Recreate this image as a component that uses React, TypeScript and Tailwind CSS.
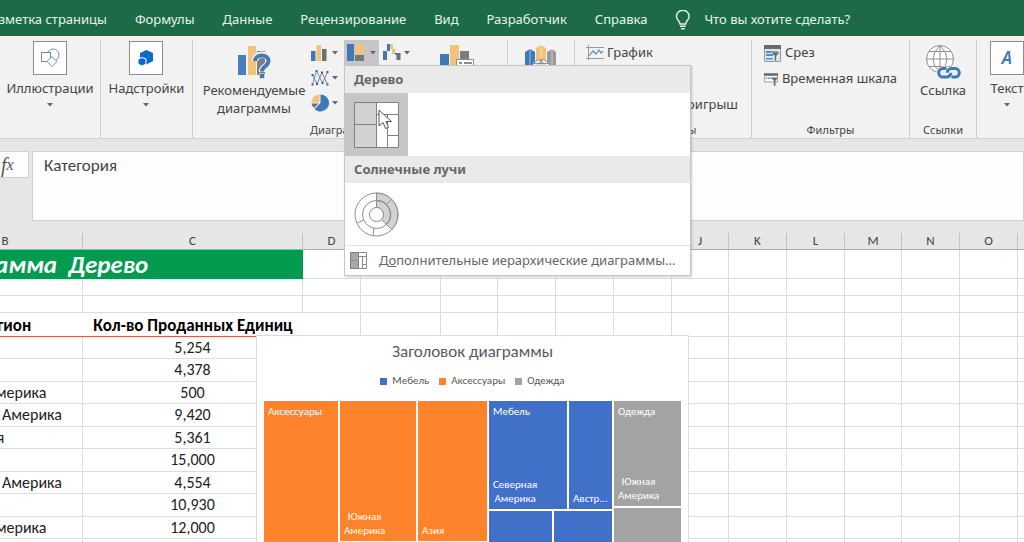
import type { ReactNode } from "react";

const TABS = ["Разметка страницы", "Формулы", "Данные", "Рецензирование", "Вид", "Разработчик", "Справка"];

const COLUMNS = ["D", "E", "F", "G", "H", "I", "J", "K", "L", "M", "N", "O", "P"];

const ROWS = [
  { region: "", units: "5,254" },
  { region: "", units: "4,378" },
  { region: "Южная Америка", units: "500" },
  { region: "Северная Америка", units: "9,420" },
  { region: "Австралия", units: "5,361" },
  { region: "", units: "15,000" },
  { region: "Северная Америка", units: "4,554" },
  { region: "", units: "10,930" },
  { region: "Южная Америка", units: "12,000" },
  { region: "", units: "" },
];

const LEGEND = [
  { name: "Мебель", swatch: "bg-[#4070c8]" },
  { name: "Аксессуары", swatch: "bg-[#fd842d]" },
  { name: "Одежда", swatch: "bg-[#a3a3a3]" },
];

function Caret() {
  return (
    <svg width="6" height="4" viewBox="0 0 6 4" aria-hidden="true">
      <path d="M0 0h6L3 3.5z" fill="#666" />
    </svg>
  );
}

function Group({
  width,
  label,
  labelClass = "",
  children,
}: {
  width: string;
  label?: string;
  labelClass?: string;
  children: ReactNode;
}) {
  return (
    <section className={`${width} flex shrink-0 flex-col border-r border-[#cfcfcf]`}>
      <div className="flex h-[82px] shrink-0 justify-center">{children}</div>
      {label && <div className={`${labelClass} text-center text-[11px] leading-4 text-[#444]`}>{label}</div>}
    </section>
  );
}

function BoxedButton({ label, children }: { label: string; children: ReactNode }) {
  return (
    <button type="button" className="flex flex-col items-center pt-px">
      <span className="flex size-[34px] items-center justify-center border border-[#8c8c8c] bg-white">{children}</span>
      <span className="mt-[3px] leading-5">{label}</span>
      <span className="mt-[5px] flex">
        <Caret />
      </span>
    </button>
  );
}

function ShapesIcon() {
  return (
    <svg width="20" height="20" viewBox="0 0 20 20" fill="#fff" stroke="#6d8cac" strokeWidth="1">
      <circle cx="13" cy="7" r="6" />
      <rect x="1.500" y="4.500" width="9" height="9" />
      <path d="M12 8.500l5 5-5 5-5-5z" />
    </svg>
  );
}

function AddinsIcon() {
  return (
    <svg width="18" height="18" viewBox="0 0 18 18">
      <path d="M9.500 1l6.500 3v8l-6.500 3.500L3 12V4z" fill="#0b6bcb" />
      <path d="M5 8.500l4 1.500v5l-4 2-4-2v-5z" fill="#0b6bcb" stroke="#fff" />
    </svg>
  );
}

function RecommendedIcon() {
  return (
    <svg width="34" height="34" viewBox="0 0 34 34">
      <path d="M1 10h8v20H1z" fill="#4a7ebb" />
      <path d="M11 1h8v29h-8z" fill="#f2c37b" />
      <path d="M20 6h8v24h-8z" fill="#7d7d7d" />
      <path d="M18 16c0-8.500 14-8.500 14 0 0 6-7 5-7 11" fill="none" stroke="#f2f2f2" strokeWidth="6.500" />
      <path d="M18 16c0-7.500 13.500-7.500 13.500 0 0 5.500-6.500 5-6.500 10.500" fill="none" stroke="#4178b8" strokeWidth="4" />
      <path d="M22.500 28.500h5v5h-5z" fill="#4178b8" stroke="#f2f2f2" strokeWidth=".6" />
    </svg>
  );
}

function ColumnIcon() {
  return (
    <svg width="16" height="16" viewBox="0 0 16 16">
      <path d="M0 6h4.500v10H0z" fill="#4178b8" />
      <path d="M5.500 0H10v16H5.500z" fill="#f2c37b" />
      <path d="M11 4h4.500v12H11z" fill="#6f6f6f" />
    </svg>
  );
}

function ScatterLineIcon() {
  return (
    <svg width="18" height="18" viewBox="0 0 18 18" fill="none">
      <path d="M1.500 15.500L5.500 2l6 12L16.500 3" stroke="#6792c4" />
      <path d="M1.500 6l4.500 9 5-11.500 5.500 12" stroke="#808080" />
      <path
        d="M.500 14.500h2v2h-2zM4.500 1h2v2h-2zM10.500 13h2v2h-2zM15.500 2h2v2h-2zM.500 5h2v2h-2zM5 14h2v2H5zM10 2.500h2v2h-2zM15.500 14.500h2v2h-2z"
        fill="#44607f"
      />
    </svg>
  );
}

function PieIcon() {
  return (
    <svg width="18" height="18" viewBox="0 0 18 18">
      <path d="M9.500 9V.500a8.500 8.500 0 1 1-6 14.500z" fill="#4178b8" />
      <path d="M8.500 8.500H.500a8 8 0 0 1 8-8z" fill="#f2c37b" />
      <path d="M.500 9.500h7l-4.500 4.500A8 8 0 0 1 .500 9.500z" fill="#6f6f6f" />
    </svg>
  );
}

function HierarchyIcon() {
  return (
    <svg width="17" height="17" viewBox="0 0 17 17">
      <path d="M0 0h7v17H0z" fill="#4178b8" />
      <path d="M8 0h5a4 4 0 0 1 4 4v6H8z" fill="#f2c37b" />
      <path d="M8 11h9v6H8z" fill="#777" />
    </svg>
  );
}

function WaterfallIcon() {
  return (
    <svg width="18" height="17" viewBox="0 0 18 17">
      <path d="M0 7h4v9H0zM4 0h3v7H4z" fill="#4178b8" />
      <path d="M7 0h3v5H7zM9 5h3.500v5H9z" fill="#f2c37b" />
      <path d="M13.500 9h4v7h-4z" fill="#6f6f6f" />
      <path d="M12 9h3v2h-3z" fill="#4178b8" />
    </svg>
  );
}

function PivotChartIcon() {
  return (
    <svg width="35" height="34" viewBox="0 0 35 34">
      <path d="M0 9h9v21H0z" fill="#4178b8" />
      <path d="M10 0h9v30h-9z" fill="#f2c37b" />
      <path d="M20 6h9v24h-9z" fill="#7d7d7d" />
      <path d="M16.500 14.500h17v18h-17z" fill="#fff" stroke="#8c8c8c" />
      <path d="M19 18h3M24 18h8M19 22h3M24 22h8" stroke="#8c8c8c" strokeWidth="2" />
    </svg>
  );
}

function MapIcon() {
  return (
    <svg width="32" height="34" viewBox="0 0 32 34">
      <path d="M0 7l5-3 5 3v23H0z" fill="#4178b8" />
      <path d="M11 3l5-3 5 3v27H11z" fill="#f2c37b" />
      <path d="M22 7l5-3 4 3v23h-9z" fill="#9a9a9a" />
      <path d="M5 4v24M16 0v24M27 4v24" stroke="#fff" strokeOpacity=".5" />
      <circle cx="16" cy="24" r="9.500" fill="#fff" stroke="#8c8c8c" />
      <path d="M16 15v18M7 24h18M9 18.500h14M16 15q-8 9 0 18M16 15q8 9 0 18" fill="none" stroke="#8c8c8c" />
    </svg>
  );
}

function SparklineIcon() {
  return (
    <svg width="18" height="16" viewBox="0 0 18 16" fill="none">
      <path d="M2.500 0v15M0 13.500h18M0 2.500h18" stroke="#999" />
      <path d="M3 11l4-5 3 3 3-4 2 3 2-2" stroke="#5a8bc4" strokeWidth="1.200" />
    </svg>
  );
}

function WinLossIcon() {
  return (
    <svg width="18" height="16" viewBox="0 0 18 16" fill="none">
      <path d="M1 3h3v4H1zM6 3h3v4H6z" fill="#4178b8" />
      <path d="M11 9h3v4h-3z" fill="#777" />
    </svg>
  );
}

function SlicerIcon() {
  return (
    <svg width="17" height="17" viewBox="0 0 17 17">
      <path d="M.500.500h16v16H.500z" fill="#dde7f2" stroke="#8a9bb0" />
      <path d="M0 0h17v4H0z" fill="#6a6a6a" />
      <path d="M2 6h12v2H2zM2 9h7v2H2zM2 13h7v1.500H2z" fill="#5a8bc4" />
      <path d="M7 7h9l-3.500 4v5h-2v-5z" fill="#6a6a6a" stroke="#f2f2f2" strokeWidth=".5" />
    </svg>
  );
}

function TimelineIcon() {
  return (
    <svg width="17" height="15" viewBox="0 0 17 15">
      <path d="M.500.500h16v10H.500z" fill="#fff" stroke="#8a8a8a" />
      <path d="M0 0h17v3H0z" fill="#6a6a6a" />
      <path d="M2 5h2v2H2zM5 5h3v2H5zM9 5h2v2H9z" fill="#5a8bc4" />
      <path d="M9 5h8l-3 4v6h-2V9z" fill="#6a6a6a" />
    </svg>
  );
}

function LinkIcon() {
  return (
    <svg width="36" height="35" viewBox="0 0 36 35" fill="none">
      <circle cx="15" cy="15" r="13.500" fill="#fff" stroke="#8e8e8e" />
      <path d="M15 1.500v27M1.500 15h27M4 7.500h22M4 22.500h22M15 1.500q-14 13.500 0 27M15 1.500q14 13.500 0 27" stroke="#8e8e8e" />
      <g stroke="#f2f2f2" strokeWidth="6">
        <rect x="14.500" y="25.500" width="11" height="7" rx="3.500" />
        <rect x="23" y="25.500" width="11" height="7" rx="3.500" />
      </g>
      <g stroke="#4178b8" strokeWidth="3">
        <path d="M21.500 24.500H18a4.300 4.300 0 0 0 0 8.600h3.500a4.300 4.300 0 0 0 4.300-4.300" />
        <path d="M26.500 33.100H30a4.300 4.300 0 0 0 0-8.600h-3.500a4.300 4.300 0 0 0-4.300 4.300" />
      </g>
    </svg>
  );
}

function BulbIcon() {
  return (
    <svg width="16" height="20" viewBox="0 0 16 20" fill="none" stroke="#e6f0ea" strokeWidth="1.400">
      <path d="M5 14c0-3-3.500-4-3.500-7.500a6.300 6.300 0 0 1 12.600 0C14.100 10 10.700 11 10.700 14zM5 16.300h5.700M6 18.800h3.700" />
    </svg>
  );
}

function TreemapIcon() {
  return (
    <svg width="45" height="46" viewBox="0 0 45 46" fill="#fff" stroke="#808080">
      <path d="M.500.500h44v45H.500z" />
      <path d="M.500.500h22v45h-22z" fill="#d2d2d2" />
      <path d="M.500 22.500h22M22.500 12.500h22M33.500 12.500v33M33.500 33.500h11" />
    </svg>
  );
}

function SunburstIcon() {
  return (
    <svg width="45" height="45" viewBox="0 0 45 45" fill="none" stroke="#8c8c8c">
      <circle cx="22.500" cy="22.500" r="21.500" fill="#fff" />
      <path d="M22.500 1a21.500 21.500 0 0 1 15.200 36.700l-5.300-5.300A14 14 0 0 0 22.500 8.500z" fill="#d2d2d2" />
      <path d="M22.500 8.500a14 14 0 0 1 9.900 23.900l-5-5A7 7 0 0 0 22.500 15.500z" fill="#d2d2d2" />
      <circle cx="22.500" cy="22.500" r="14" />
      <circle cx="22.500" cy="22.500" r="7" fill="#fff" />
      <path d="M32.400 12.600l5.300-5.300M9.500 28l-6.500 3M20 36.300l-1 7.400" />
    </svg>
  );
}

function SmallTreemapIcon() {
  return (
    <svg width="17" height="17" viewBox="0 0 17 17" fill="#fff" stroke="#8c8c8c">
      <path d="M.500.500h16v16H.500z" />
      <path d="M.500.500h8v16h-8z" fill="#a8a8a8" stroke="#808080" />
      <path d="M.500 8.500h8M8.500 4.500h8M12.500 4.500v12M12.500 12.500h4" />
    </svg>
  );
}

function Cursor() {
  return (
    <svg width="16" height="22" viewBox="0 0 16 22" className="absolute left-[33px] top-[16px]" aria-hidden="true">
      <path d="M1 1v16l4-3.500 2.500 6 3-1.300L8 12.500h5.500z" fill="#fff" stroke="#555" />
    </svg>
  );
}

function SmallButton({ name, children }: { name: string; children: ReactNode }) {
  return (
    <button type="button" aria-label={name} className="flex h-[25px] w-[27px] items-center justify-between">
      {children}
      <Caret />
    </button>
  );
}

function HierarchyMenu() {
  return (
    <div
      role="menu"
      className="absolute left-0 top-full z-20 w-[347px] border border-[#c6c6c6] bg-white text-[#666] shadow-[1px_1px_2px_rgba(0,0,0,0.2)]"
    >
      <div className="h-[27px] bg-[#eaeaea] px-[9px] font-bold leading-[27px]">Дерево</div>
      <button type="button" role="menuitem" aria-label="Дерево" className="relative flex size-[63px] items-center justify-center bg-[#c6c6c6]">
        <TreemapIcon />
        <Cursor />
      </button>
      <div className="h-[27px] bg-[#eaeaea] px-[9px] font-bold leading-[27px]">Солнечные лучи</div>
      <button type="button" role="menuitem" aria-label="Солнечные лучи" className="flex size-[62px] items-center justify-center">
        <SunburstIcon />
      </button>
      <button type="button" role="menuitem" className="flex h-[30px] w-full items-center gap-3 border-t border-[#e1e1e1] px-[5px]">
        <SmallTreemapIcon />
        <span>
          Д<u>о</u>полнительные иерархические диаграммы...
        </span>
      </button>
    </div>
  );
}

function Ribbon() {
  return (
    <div className="relative z-10 flex h-[103px] shrink-0 border-b border-[#d2d2d2] bg-[#f2f2f2] pt-1 text-[13px] text-[#444]">
      <Group width="w-[101px]">
        <BoxedButton label="Иллюстрации">
          <ShapesIcon />
        </BoxedButton>
      </Group>
      <Group width="w-[92px]">
        <BoxedButton label="Надстройки">
          <AddinsIcon />
        </BoxedButton>
      </Group>
      <Group width="w-[315px]" label="Диаграммы" labelClass="pr-4">
        <div className="flex w-full pl-[11px]">
          <button type="button" className="flex w-[100px] flex-col items-center pt-[5px]">
            <RecommendedIcon />
            <span className="mt-[2px] leading-[18px]">
              Рекомендуемые
              <br />
              диаграммы
            </span>
          </button>
          <div className="w-10 pl-[7px]">
            <SmallButton name="Гистограмма">
              <ColumnIcon />
            </SmallButton>
            <SmallButton name="График">
              <ScatterLineIcon />
            </SmallButton>
            <SmallButton name="Круговая">
              <PieIcon />
            </SmallButton>
          </div>
          <div className="relative h-[25px]">
            <button type="button" aria-label="Иерархическая" aria-expanded="true" className="flex h-full w-[35px] items-center justify-between bg-[#c6c6c6] px-[3px]">
              <HierarchyIcon />
              <Caret />
            </button>
            <HierarchyMenu />
          </div>
          <div className="ml-1">
            <SmallButton name="Каскадная">
              <WaterfallIcon />
            </SmallButton>
          </div>
          <button type="button" aria-label="Сводная диаграмма" className="ml-[30px] flex pt-[5px]">
            <PivotChartIcon />
          </button>
        </div>
      </Group>
      <Group width="w-[67px]">
        <button type="button" aria-label="3D-карта" className="flex pt-[5px]">
          <MapIcon />
        </button>
      </Group>
      <Group width="w-[177px]" label="Спарклайны">
        <div className="flex w-full flex-col justify-between px-[11px] pb-1">
          <button type="button" className="flex h-[26px] items-center gap-[3px]">
            <SparklineIcon />
            График
          </button>
          <button type="button" className="flex h-[26px] items-center gap-px whitespace-nowrap">
            <WinLossIcon />
            Выигрыш/проигрыш
          </button>
        </div>
      </Group>
      <Group width="w-[158px]" label="Фильтры">
        <div className="flex w-full flex-col px-3">
          <button type="button" className="flex h-[26px] items-center gap-1">
            <SlicerIcon />
            Срез
          </button>
          <button type="button" className="flex h-[26px] items-center gap-1 whitespace-nowrap">
            <TimelineIcon />
            Временная шкала
          </button>
        </div>
      </Group>
      <Group width="w-[67px]" label="Ссылки">
        <button type="button" className="flex flex-col items-center pt-1">
          <LinkIcon />
          <span className="mt-[2px] leading-[18px]">Ссылка</span>
        </button>
      </Group>
      <Group width="w-[61px]">
        <BoxedButton label="Текст">
          <span className="text-[17px] font-semibold italic text-[#4178b8]">A</span>
        </BoxedButton>
      </Group>
    </div>
  );
}

function FormulaBar() {
  return (
    <div className="flex shrink-0 gap-[3px] bg-[#e6e6e6] pb-3 pt-3">
      <button
        type="button"
        aria-label="Вставить функцию"
        className="flex h-[27px] w-[29px] items-center border border-l-0 border-[#d0d0d0] bg-[#fdfdfd] pl-px font-['Liberation_Serif',serif] text-[20px] italic text-[#555]"
      >
        f<span className="text-[16px]">x</span>
      </button>
      <textarea
        aria-label="Строка формул"
        defaultValue="Категория"
        className="h-[70px] flex-1 resize-none border border-[#d0d0d0] bg-[#fdfdfd] px-[11px] py-1 font-[Carlito,Lato,'Noto_Sans',sans-serif] text-[17px] leading-[20px] text-[#444] outline-none"
      />
    </div>
  );
}

const CELL = "border-b border-r border-[#dcdcdc] p-0";

function EmptyCells({ row }: { row: string }) {
  return (
    <>
      {COLUMNS.map((column) => (
        <td key={`${row}-${column}`} className={CELL} />
      ))}
    </>
  );
}

function Sheet() {
  return (
    <table className="-ml-[72px] w-[1147px] table-fixed border-separate border-spacing-0 text-[16px] leading-5 text-[#222]">
      <colgroup>
        <col className="w-[155px]" />
        <col className="w-[220px]" />
        <col className="w-[58px]" />
        <col className="w-[80px]" />
        <col className="w-[57px]" />
        <col className="w-[58px]" />
        <col className="w-[58px]" />
        <col className="w-[58px]" />
        <col className="w-[57px]" />
        <col className="w-[58px]" />
        <col className="w-[58px]" />
        <col className="w-[57px]" />
        <col className="w-[58px]" />
        <col className="w-[58px]" />
        <col className="w-[59px]" />
      </colgroup>
      <thead>
        <tr className="h-[17px] bg-[#e6e6e6] text-[13px] leading-4 text-[#444]">
          {["B", "C", ...COLUMNS].map((column) => (
            <th key={column} scope="col" className="border-b border-r border-b-[#ababab] border-r-[#c4c4c4] p-0 font-normal">
              {column}
            </th>
          ))}
        </tr>
      </thead>
      <tbody>
        <tr className="h-[29px]">
          <td colSpan={2} className="bg-[#009b4f] p-0 text-[25px] font-black italic leading-[29px] text-white">
            <div className="whitespace-pre">Диаграмма  Дерево</div>
          </td>
          <EmptyCells row="title" />
        </tr>
        {["gap-1", "gap-2"].map((row) => (
          <tr key={row} className="h-[17px]">
            <td className={CELL} />
            <td className={CELL} />
            <EmptyCells row={row} />
          </tr>
        ))}
        <tr className="h-6 text-[17px] text-black">
          <th scope="col" className="border-b border-[#e0574c] px-0 pb-0 pt-[3px] font-bold">
            Регион
          </th>
          <th scope="col" className="whitespace-nowrap border-b border-[#e0574c] px-0 pb-0 pt-[3px] font-bold">
            Кол-во Проданных Единиц
          </th>
          <EmptyCells row="head" />
        </tr>
      </tbody>
      <tbody>
        {ROWS.map(({ region, units }, index) => (
          <tr key={index} className="odd:h-[22px] even:h-[23px]">
            <td className="whitespace-nowrap border-b border-r border-[#dcdcdc] py-0 pl-[6px] pr-0">{region}</td>
            <td className={`${CELL} text-center`}>{units}</td>
            <EmptyCells row={`row-${index}`} />
          </tr>
        ))}
      </tbody>
    </table>
  );
}

function Tile({ className, top, bottom }: { className: string; top?: string; bottom?: ReactNode }) {
  return (
    <div className={`${className} flex flex-col justify-between overflow-hidden px-1 pb-[3px] pt-1 text-[11px] leading-[14px] text-white`}>
      <span>{top}</span>
      <span className="self-start whitespace-nowrap text-center">{bottom}</span>
    </div>
  );
}

function Chart() {
  const southAmerica = (
    <>
      Южная
      <br />
      Америка
    </>
  );
  return (
    <figure className="absolute left-[256px] top-[102px] w-[433px] border border-[#dcdcdc] bg-white px-[7px] pb-2">
      <figcaption className="pt-[7px] text-center text-[17px] leading-[18px] text-[#595959]">Заголовок диаграммы</figcaption>
      <ul className="mt-3 flex h-4 items-center justify-center gap-[10px] text-[11px] text-[#595959]">
        {LEGEND.map(({ name, swatch }) => (
          <li key={name} className="flex items-center gap-[5px]">
            <span className={`size-[7px] ${swatch}`} />
            {name}
          </li>
        ))}
      </ul>
      <div className="mt-3 flex h-[230px] gap-[2px]">
        <Tile className="w-[74px] bg-[#fd842d]" top="Аксессуары" />
        <div className="grid w-[147px] grid-cols-[76px_69px] grid-rows-[140px_1fr] gap-[2px]">
          <Tile className="bg-[#fd842d]" bottom={southAmerica} />
          <Tile className="bg-[#fd842d]" bottom="Азия" />
          <Tile className="col-span-2 bg-[#fd842d]" />
        </div>
        <div className="flex w-[123px] flex-col gap-[2px]">
          <div className="flex h-[108px] gap-[2px]">
            <Tile
              className="w-[78px] bg-[#4070c8]"
              top="Мебель"
              bottom={
                <>
                  Северная
                  <br />
                  Америка
                </>
              }
            />
            <Tile className="flex-1 bg-[#4070c8]" bottom="Австр..." />
          </div>
          <div className="flex flex-1 gap-[2px]">
            <Tile className="w-[63px] bg-[#4070c8]" />
            <Tile className="flex-1 bg-[#4070c8]" />
          </div>
        </div>
        <div className="flex flex-1 flex-col gap-[2px]">
          <Tile className="h-[105px] bg-[#a3a3a3]" top="Одежда" bottom={southAmerica} />
          <Tile className="flex-1 bg-[#a3a3a3]" />
        </div>
      </div>
    </figure>
  );
}

export default function App() {
  return (
    <div className="flex h-screen flex-col overflow-hidden bg-white font-['Noto_Sans','Open_Sans',sans-serif]">
      <nav className="flex h-9 shrink-0 items-center gap-7 whitespace-nowrap bg-[#1c6b46] pt-[3px] text-[13px] text-[#e9f2ed]">
        {TABS.map((tab) => (
          <a key={tab} href="#" className="first:-ml-4">
            {tab}
          </a>
        ))}
        <label className="flex flex-1 items-center gap-[13px]">
          <BulbIcon />
          <input
            type="text"
            placeholder="Что вы хотите сделать?"
            className="w-[200px] bg-transparent outline-none placeholder:text-[#e9f2ed]"
          />
        </label>
      </nav>
      <Ribbon />
      <FormulaBar />
      <main className="relative flex-1 overflow-hidden font-[Carlito,Lato,'Noto_Sans',sans-serif]">
        <Sheet />
        <Chart />
      </main>
    </div>
  );
}
